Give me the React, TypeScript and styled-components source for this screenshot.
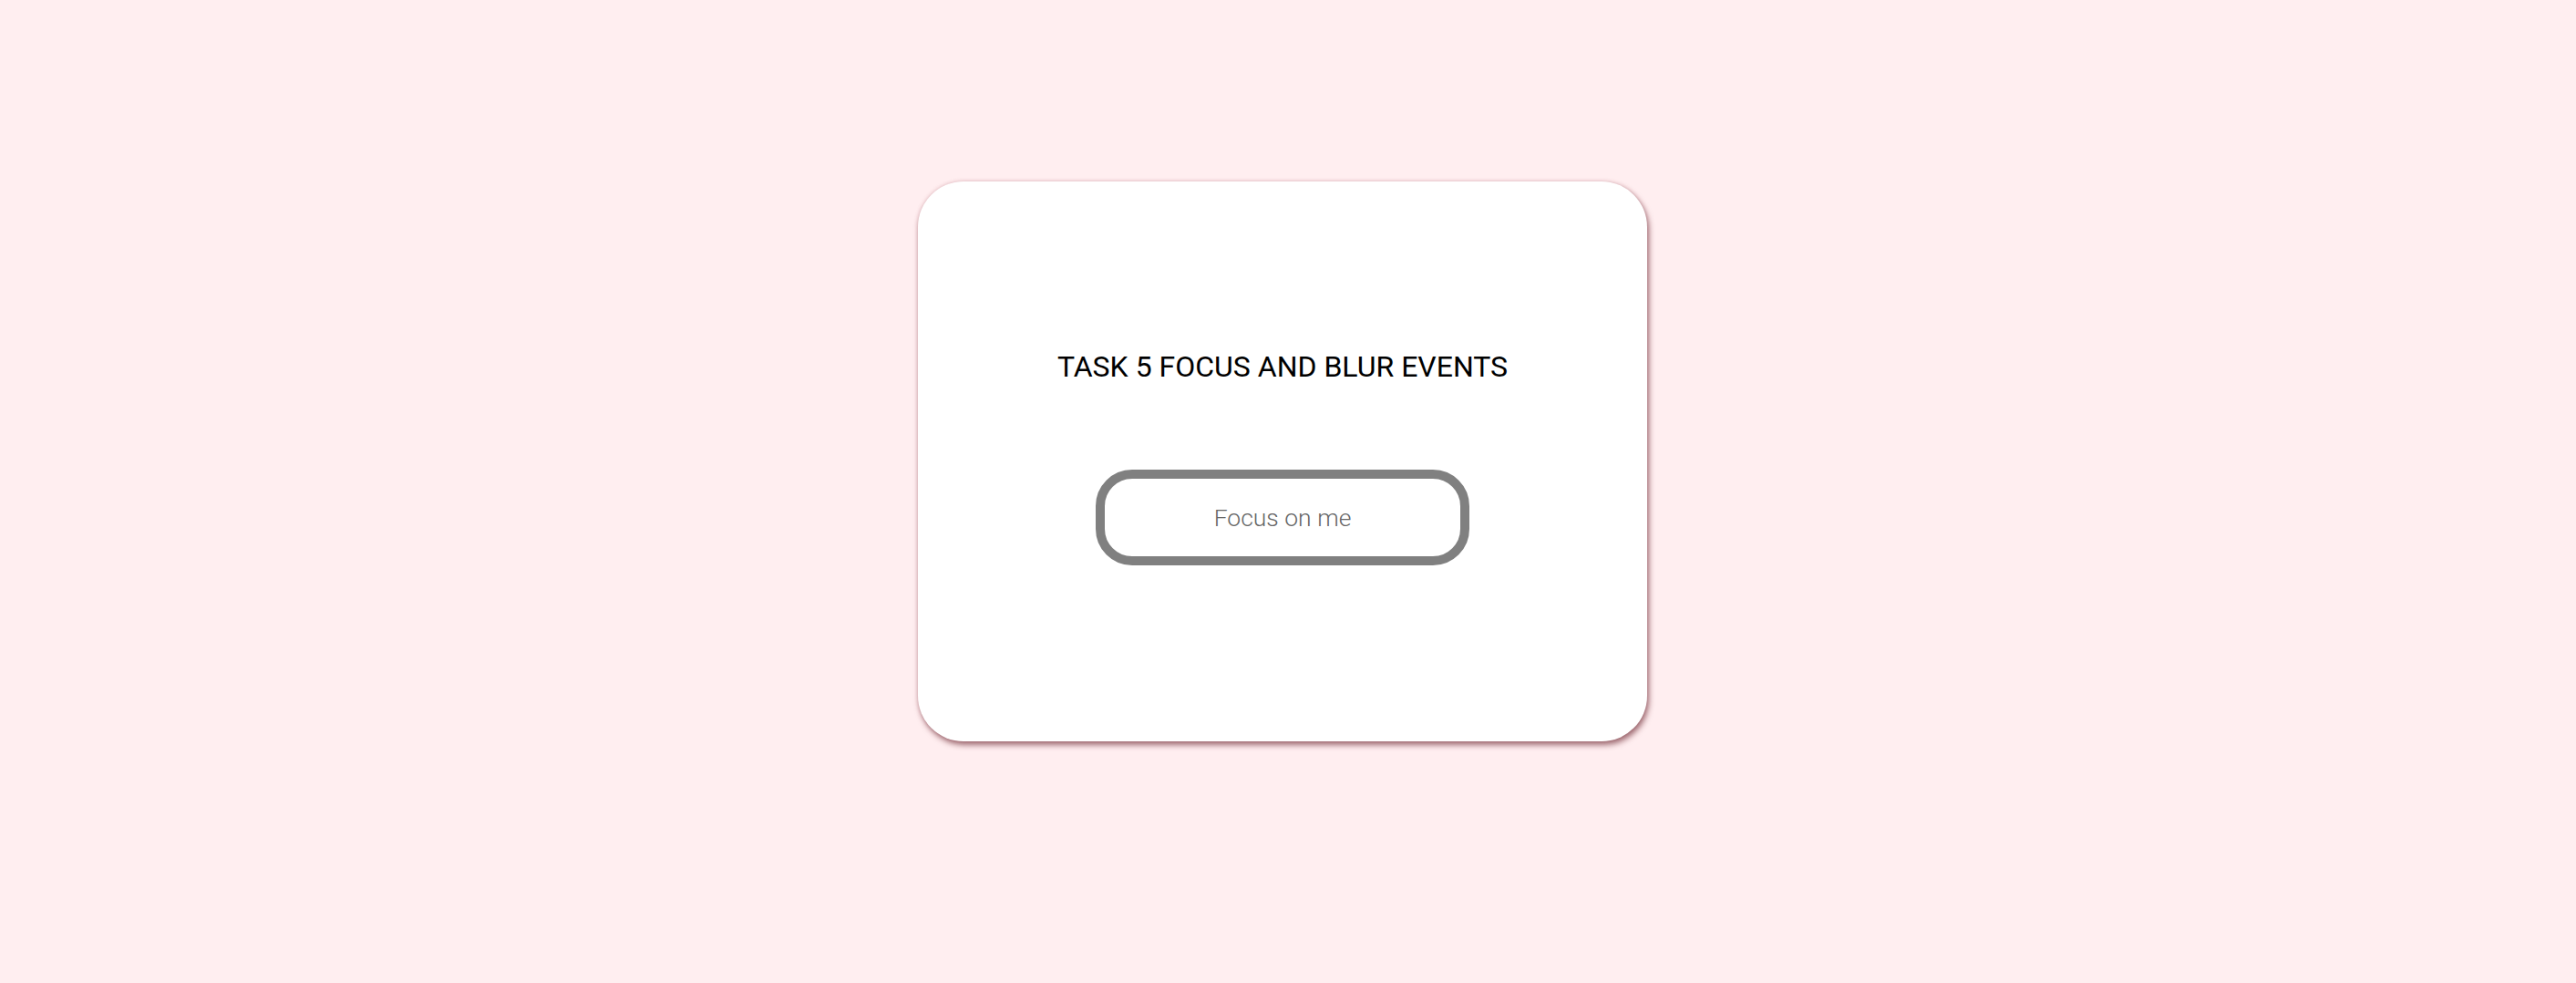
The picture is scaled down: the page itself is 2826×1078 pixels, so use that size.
import React from 'react';
import styled, { createGlobalStyle } from 'styled-components';

const GlobalStyle = createGlobalStyle`
  html, body {
    margin: 0;
    padding: 0;
    background: #ffeef0;
    font-family: Roboto, 'Liberation Sans', sans-serif;
  }
`;

const App: React.FC = () => {
  return (
    <Page>
      <GlobalStyle />
      <Card>
        <Title>TASK 5 FOCUS AND BLUR EVENTS</Title>
        <FocusInput type="text" placeholder="Focus on me" />
      </Card>
    </Page>
  );
};

const Page: any = styled.div`
  display: flex;
  justify-content: center;
  min-height: 1078px;
  padding: 199px 12px 0 0;
  box-sizing: border-box;
  background: #ffeef0;
`;

const Card: any = styled.div`
  display: flex;
  flex-direction: column;
  align-items: center;
  box-sizing: border-box;
  width: 800px;
  height: 614px;
  padding-top: 184px;
  background: #ffffff;
  border-radius: 50px;
  box-shadow: 2px 4px 6px rgba(100, 30, 40, 0.6), 0 0 4px rgba(190, 110, 120, 0.35);
`;

const Title: any = styled.h1`
  margin: 0;
  font-family: Roboto, 'Liberation Sans', sans-serif;
  font-weight: 400;
  font-size: 32px;
  line-height: 38px;
  color: #000;
`;

const FocusInput: any = styled.input`
  margin-top: 94px;
  box-sizing: border-box;
  width: 410px;
  height: 105px;
  border: 10px solid #808080;
  border-radius: 40px;
  outline: none;
  background: #fff;
  text-align: center;
  font-family: 'Roboto Light', Roboto, 'Liberation Sans', sans-serif;
  font-weight: 300;
  font-size: 26.5px;
  color: #333;
  &::placeholder {
    color: #666666;
    font-weight: 300;
  }
`;

export default App;
